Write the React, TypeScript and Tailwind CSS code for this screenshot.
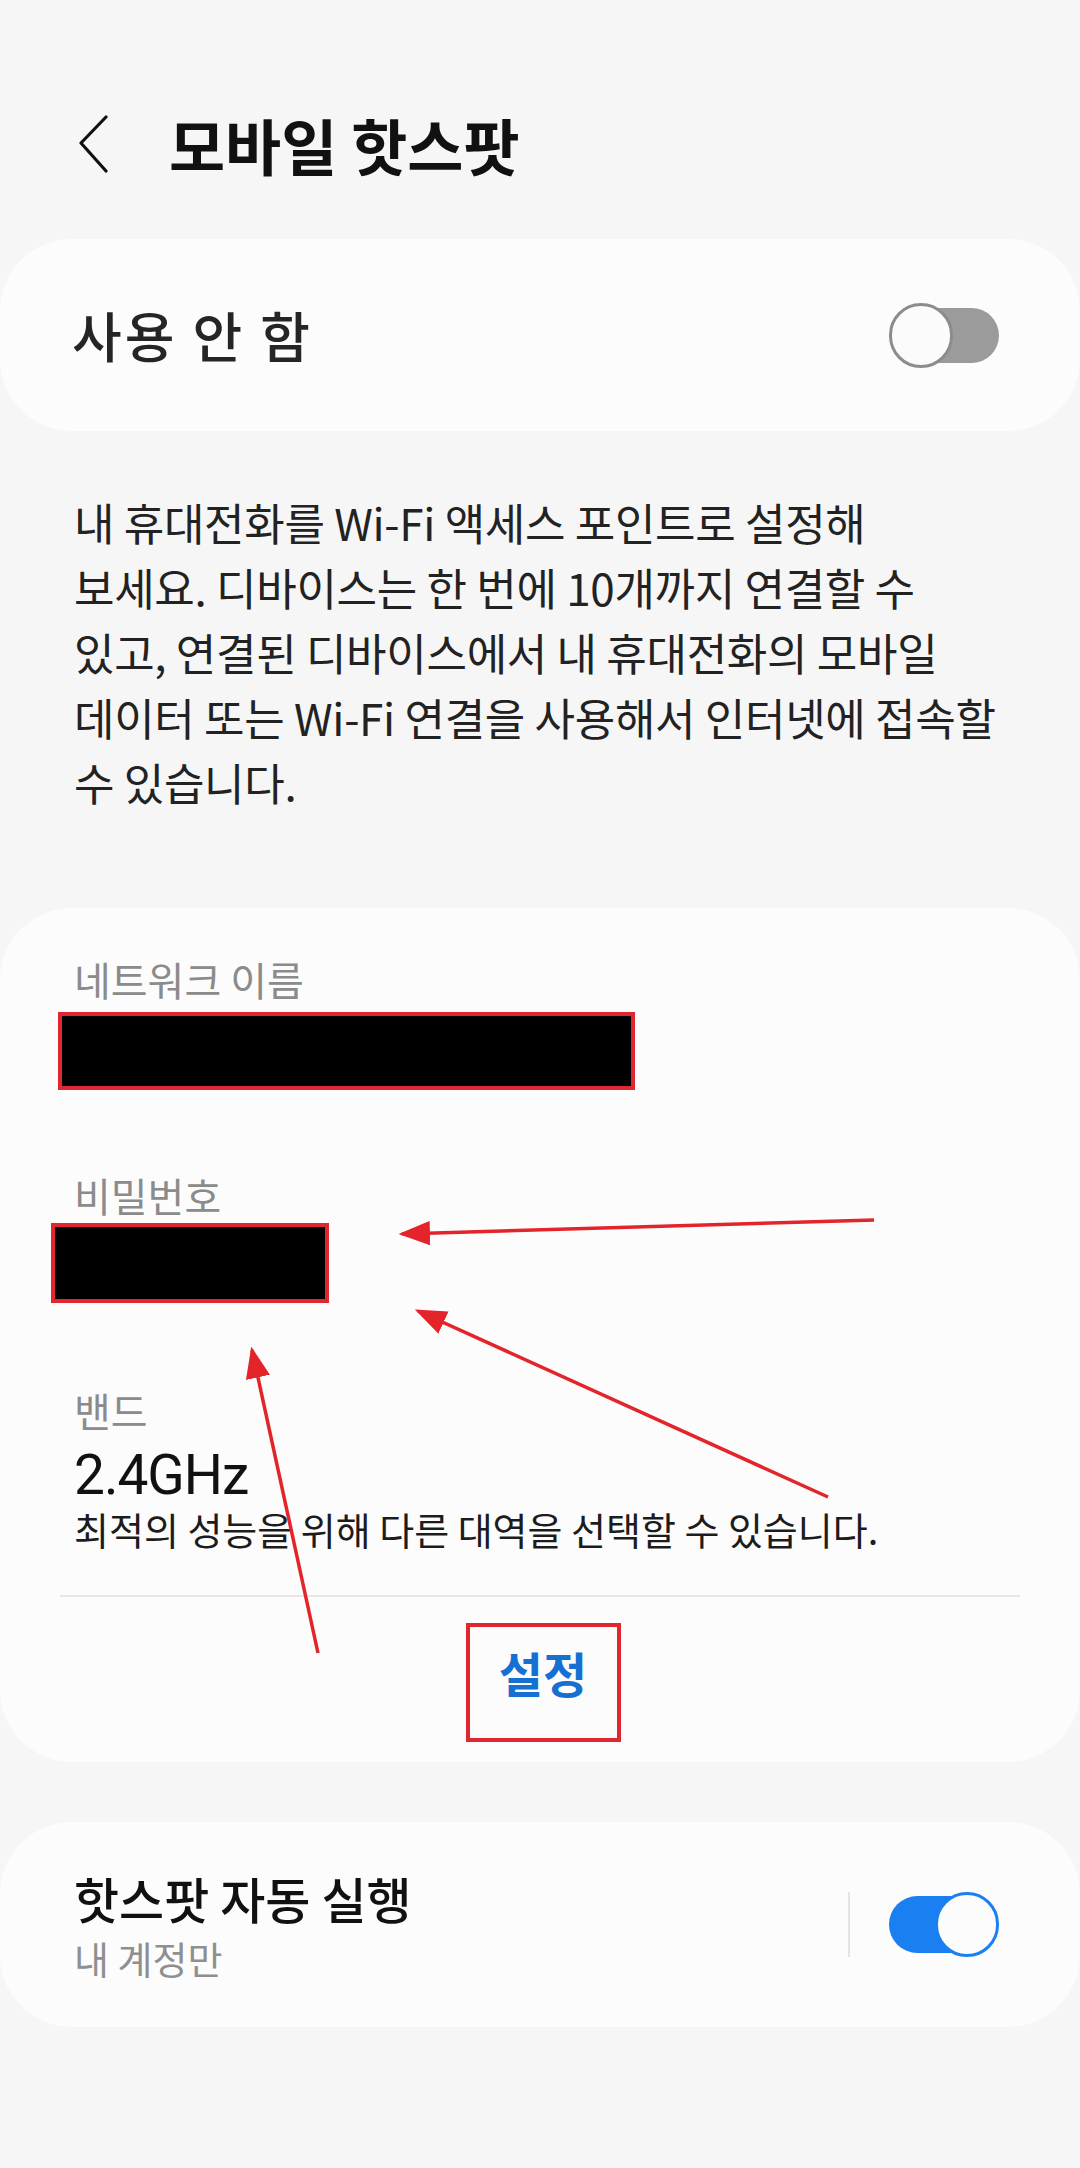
import React from 'react';

const KR = { fontFamily: '"Noto Sans CJK KR", "Noto Sans", sans-serif' };

const Toggle = ({ on }: { on: boolean }) => {
    return (
        <div className="relative w-[110px] h-[65px] shrink-0">
            {on ? (
                <>
                    <div className="absolute top-[4px] bottom-[4px] left-0 right-[6px] rounded-full bg-[#1a7ff0]" />
                    <div className="absolute right-0 top-0 w-[64px] h-[65px] rounded-full border-[3px] border-[#1a7ff0] bg-[#fcfcfc]" />
                </>
            ) : (
                <>
                    <div className="absolute top-[5px] bottom-[5px] left-[6px] right-0 rounded-full bg-[#9b9b9b]" />
                    <div className="absolute left-0 top-0 w-[64px] h-[65px] rounded-full border-[3px] border-[#8c8c8c] bg-[#fbfbfb]" />
                </>
            )}
        </div>
    );
};

const Redacted = ({ className }: { className: string }) => (
    <div className={`bg-black border-4 border-[#e0262f] ${className}`} />
);

const Arrows = () => (
    <svg className="absolute inset-0 pointer-events-none" width="1080" height="2168" viewBox="0 0 1080 2168">
        <defs>
            <marker id="head" markerWidth="9" markerHeight="7" refX="8" refY="3.5" orient="auto" markerUnits="strokeWidth">
                <polygon points="0 0, 9 3.5, 0 7" fill="#e3242b" />
            </marker>
        </defs>
        <line x1="874" y1="1220" x2="402" y2="1234" stroke="#e3242b" strokeWidth="3.5" markerEnd="url(#head)" />
        <line x1="828" y1="1497" x2="418" y2="1311" stroke="#e3242b" strokeWidth="3.5" markerEnd="url(#head)" />
        <line x1="318" y1="1653" x2="252" y2="1350" stroke="#e3242b" strokeWidth="3.5" markerEnd="url(#head)" />
    </svg>
);

export default function App() {
    return (
        <div className="relative w-[1080px] min-h-[2168px] bg-[#f6f6f6] text-[#222] pt-[104px]" style={KR}>
            {/* header */}
            <div className="flex items-center h-[80px] pl-[78px]">
                <svg width="32" height="58" viewBox="0 0 32 58" className="shrink-0">
                    <polyline points="28,2 3,28 28,56" fill="none" stroke="#111" strokeWidth="3.2" strokeLinejoin="round" strokeLinecap="round" />
                </svg>
                <h1 className="ml-[59px] text-[61px] font-bold text-[#111] leading-none">모바일 핫스팟</h1>
            </div>

            {/* master switch */}
            <div className="mt-[55px] h-[192px] rounded-[72px] bg-[#fcfcfc] flex items-center justify-between pl-[72px] pr-[81px]">
                <span className="text-[54px] font-medium tracking-[3px] text-[#252525] leading-none">사용 안 함</span>
                <Toggle on={false} />
            </div>

            {/* description */}
            <p className="mt-[59px] px-[74px] text-[44px] leading-[65px] text-[#222] whitespace-nowrap tracking-[-0.3px]">
                내 휴대전화를 Wi-Fi 액세스 포인트로 설정해<br />
                보세요. 디바이스는 한 번에 10개까지 연결할 수<br />
                있고, 연결된 디바이스에서 내 휴대전화의 모바일<br />
                데이터 또는 Wi-Fi 연결을 사용해서 인터넷에 접속할<br />
                수 있습니다.
            </p>

            {/* network card */}
            <div className="mt-[93px] rounded-[72px] bg-[#fcfcfc] px-[74px] pt-[49px] pb-[20px] flex flex-col">
                <div className="text-[40px] leading-[44px] text-[#8b8b8b]">네트워크 이름</div>
                <Redacted className="mt-[11px] -ml-[16px] w-[577px] h-[78px]" />

                <div className="mt-[83px] text-[40px] leading-[44px] text-[#8b8b8b]">비밀번호</div>
                <Redacted className="mt-[6px] -ml-[23px] w-[278px] h-[80px]" />

                <div className="mt-[85px] text-[40px] leading-[44px] text-[#8b8b8b]">밴드</div>
                <div className="mt-[11px] text-[55px] leading-[64px] text-[#111] tracking-[-1px]" style={{ fontFamily: 'Roboto, "Noto Sans", sans-serif' }}>2.4GHz</div>
                <div className="text-[38px] leading-[44px] text-[#1c1c1c] whitespace-nowrap">최적의 성능을 위해 다른 대역을 선택할 수 있습니다.</div>

                <div className="mt-[44px] -mx-[14px] h-[2px] bg-[#e7e7e7]" />

                <div className="mt-[26px] flex justify-center">
                    <div className="ml-[6px] w-[155px] h-[119px] border-4 border-[#e0262f] flex justify-center pt-[20px]">
                        <span className="text-[48px] leading-[50px] font-bold text-[#1670d2]">설정</span>
                    </div>
                </div>
            </div>

            {/* auto hotspot */}
            <div className="mt-[60px] h-[205px] rounded-[72px] bg-[#fcfcfc] flex items-center justify-between pl-[74px] pr-[81px]">
                <div className="flex flex-col">
                    <span className="text-[49px] leading-[56px] font-medium text-[#111]">핫스팟 자동 실행</span>
                    <span className="mt-[10px] text-[38px] leading-[44px] text-[#8f8f8f]">내 계정만</span>
                </div>
                <div className="flex items-center gap-[39px]">
                    <div className="w-[2px] h-[65px] bg-[#e4e4e4]" />
                    <Toggle on={true} />
                </div>
            </div>

            <Arrows />
        </div>
    );
}
